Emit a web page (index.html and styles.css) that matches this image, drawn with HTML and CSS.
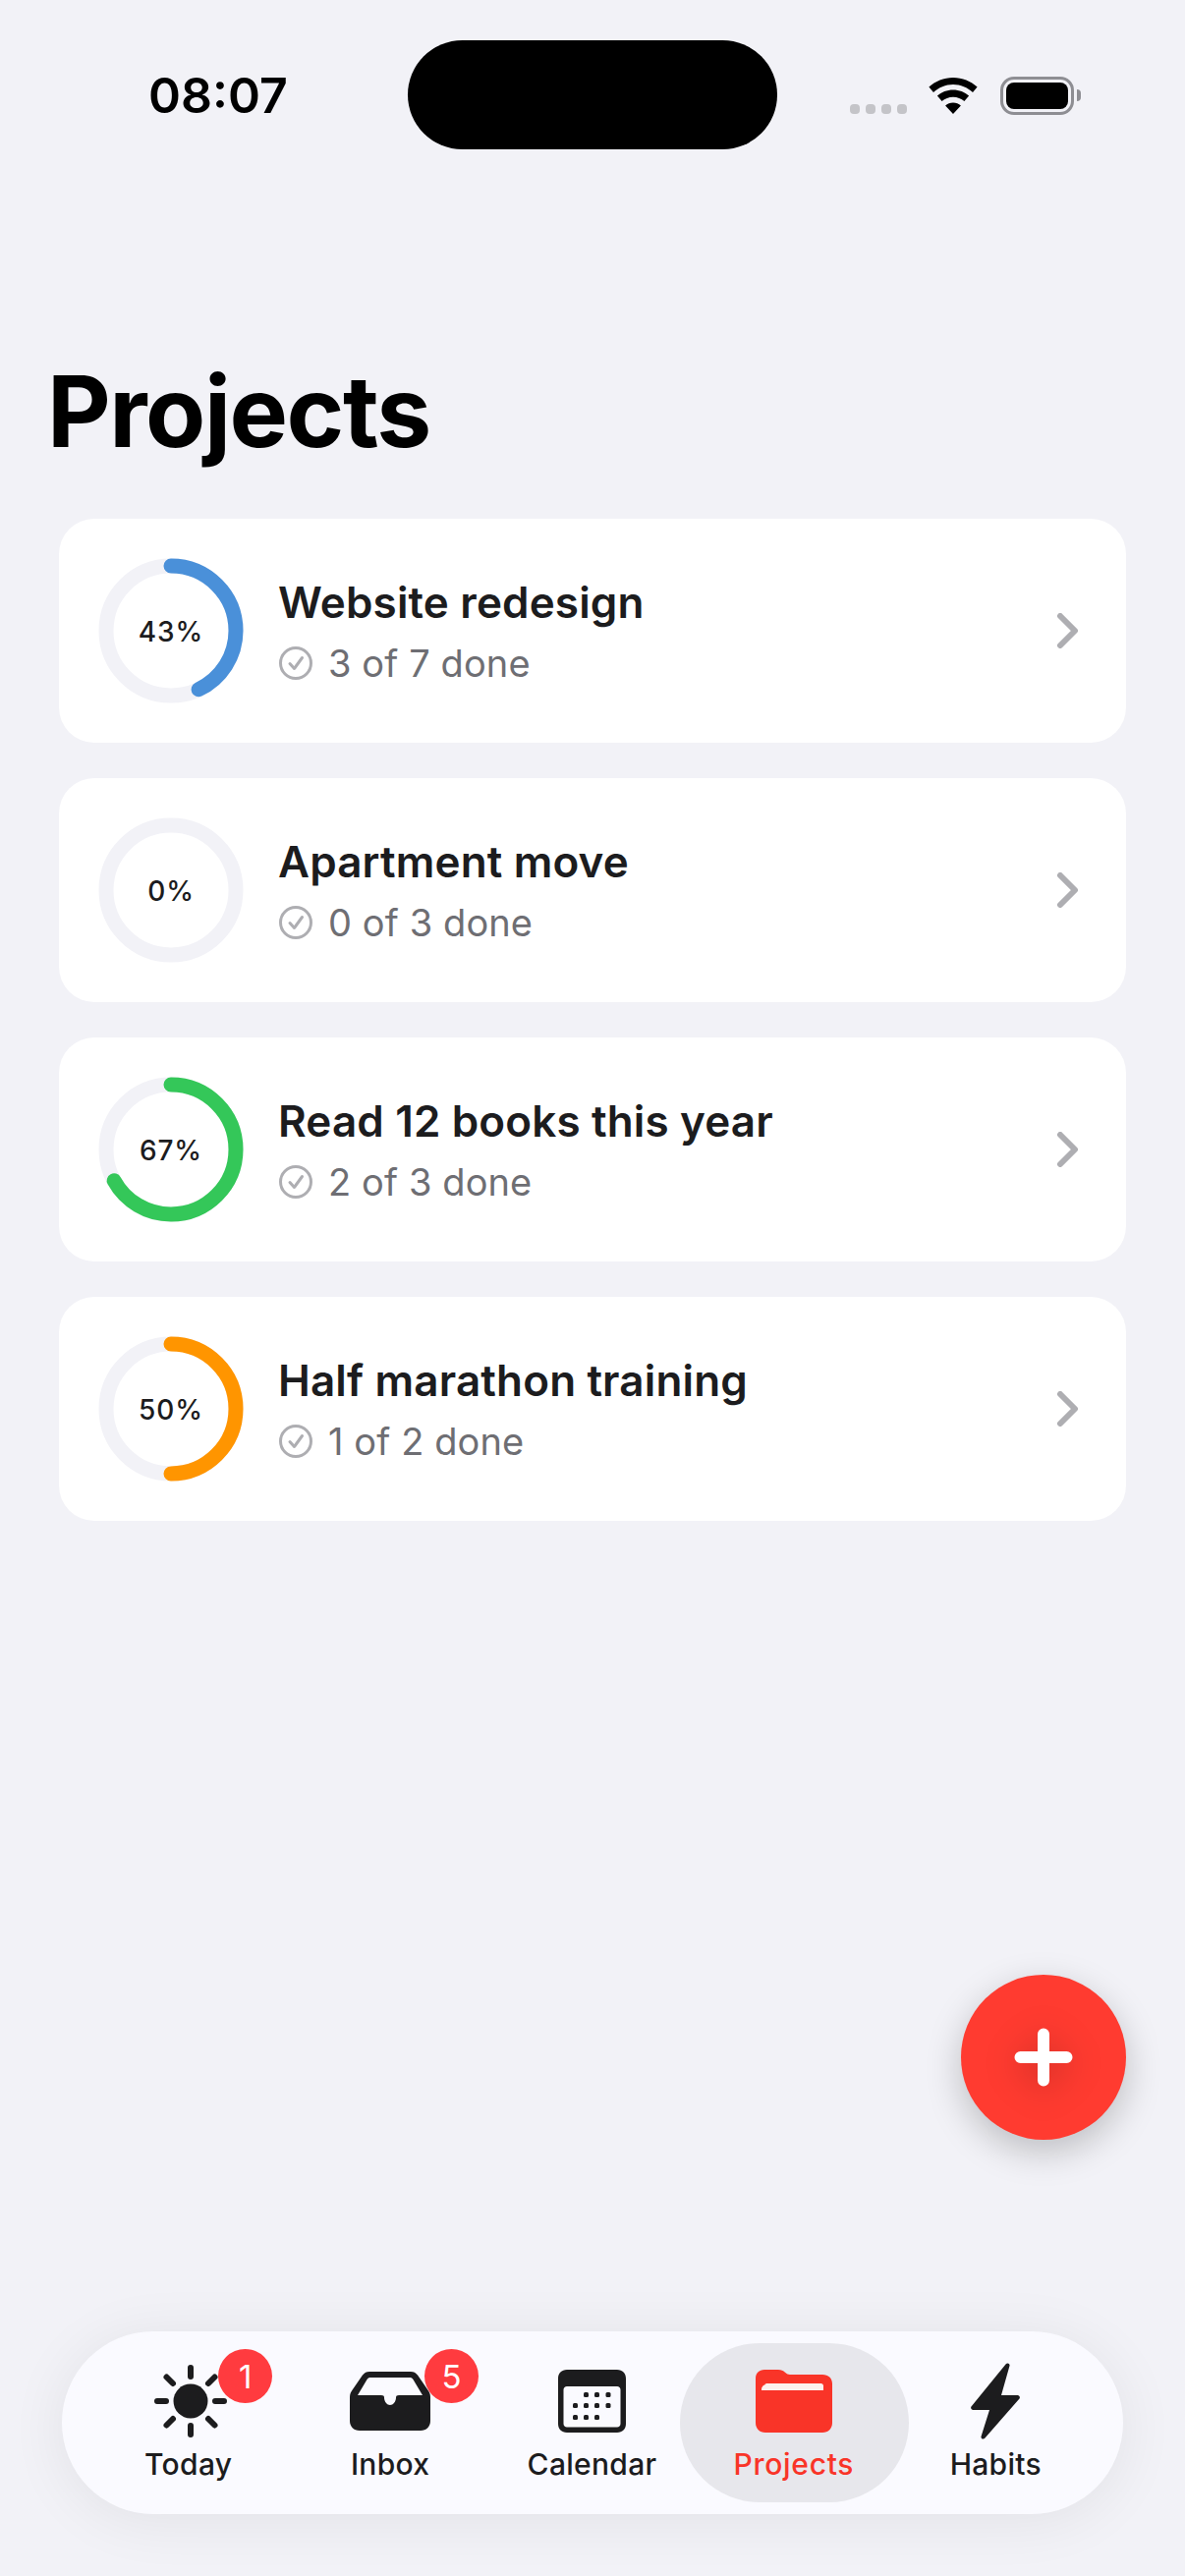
FILE: index.html
```html
<!DOCTYPE html>
<html lang="en">
<head>
<meta charset="utf-8">
<title>Projects</title>
<link rel="stylesheet" href="styles.css">
</head>
<body>
<div class="screen">
  <header class="status">
    <span class="time">08:07</span>
    <div class="island"></div>
    <div class="status-icons">
      <div class="dots"><i></i><i></i><i></i><i></i></div>
      <svg class="wifi" width="50" height="37" viewBox="0 0 50 37"><path d="M25 0C15.6 0 7 3.6.4 9.6l4.6 5.4C10.300 10.100 17.300 7 25 7s14.700 3.100 20 8l4.600-5.400C43 3.600 34.400 0 25 0zM25 12.500c-6.200 0-11.800 2.300-16.100 6.100l4.700 5.400c3.100-2.700 7.100-4.300 11.400-4.300s8.300 1.600 11.400 4.300l4.700-5.400c-4.300-3.800-9.900-6.100-16.100-6.100zM25 25.500c-3 0-5.800 1.100-7.900 3L25 37l7.900-8.500c-2.100-1.900-4.900-3-7.900-3z"/></svg>
      <div class="battery"><div class="battery-fill"></div></div>
      <div class="nub"></div>
    </div>
  </header>

  <h1 class="title">Projects</h1>

  <main class="list">
    <article class="card">
      <div class="ring">
        <svg viewBox="0 0 148 148" width="148" height="148"><circle class="track" cx="74" cy="74" r="66"/><circle class="arc" cx="74" cy="74" r="66" stroke="#4a90d9" pathLength="100" stroke-dasharray="43 100"/></svg>
        <span class="pct">43%</span>
      </div>
      <div class="info">
        <div class="name">Website redesign</div>
        <div class="sub"><svg class="check" width="34" height="34" viewBox="0 0 34 34"><circle cx="17" cy="17" r="15.500"/><path d="M11 17.500l4.500 5 8-11"/></svg><span>3 of 7 done</span></div>
      </div>
      <svg class="chev" width="24" height="36" viewBox="0 0 24 36"><path d="M4 3l15 15L4 33"/></svg>
    </article>
    <article class="card">
      <div class="ring">
        <svg viewBox="0 0 148 148" width="148" height="148"><circle class="track" cx="74" cy="74" r="66"/></svg>
        <span class="pct">0%</span>
      </div>
      <div class="info">
        <div class="name">Apartment move</div>
        <div class="sub"><svg class="check" width="34" height="34" viewBox="0 0 34 34"><circle cx="17" cy="17" r="15.500"/><path d="M11 17.500l4.500 5 8-11"/></svg><span>0 of 3 done</span></div>
      </div>
      <svg class="chev" width="24" height="36" viewBox="0 0 24 36"><path d="M4 3l15 15L4 33"/></svg>
    </article>
    <article class="card">
      <div class="ring">
        <svg viewBox="0 0 148 148" width="148" height="148"><circle class="track" cx="74" cy="74" r="66"/><circle class="arc" cx="74" cy="74" r="66" stroke="#34c759" pathLength="100" stroke-dasharray="67 100"/></svg>
        <span class="pct">67%</span>
      </div>
      <div class="info">
        <div class="name">Read 12 books this year</div>
        <div class="sub"><svg class="check" width="34" height="34" viewBox="0 0 34 34"><circle cx="17" cy="17" r="15.500"/><path d="M11 17.500l4.500 5 8-11"/></svg><span>2 of 3 done</span></div>
      </div>
      <svg class="chev" width="24" height="36" viewBox="0 0 24 36"><path d="M4 3l15 15L4 33"/></svg>
    </article>
    <article class="card">
      <div class="ring">
        <svg viewBox="0 0 148 148" width="148" height="148"><circle class="track" cx="74" cy="74" r="66"/><circle class="arc" cx="74" cy="74" r="66" stroke="#ff9500" pathLength="100" stroke-dasharray="50 100"/></svg>
        <span class="pct">50%</span>
      </div>
      <div class="info">
        <div class="name">Half marathon training</div>
        <div class="sub"><svg class="check" width="34" height="34" viewBox="0 0 34 34"><circle cx="17" cy="17" r="15.500"/><path d="M11 17.500l4.500 5 8-11"/></svg><span>1 of 2 done</span></div>
      </div>
      <svg class="chev" width="24" height="36" viewBox="0 0 24 36"><path d="M4 3l15 15L4 33"/></svg>
    </article>
  </main>

  <button class="fab" aria-label="Add project">
    <svg width="60" height="60" viewBox="0 0 60 60"><path d="M30 6.500v47M6.500 30h47"/></svg>
  </button>

  <nav class="tabbar">
    <div class="tab">
      <div class="tab-icon tab-icon-sun">
        <svg width="76" height="76" viewBox="0 0 76 76"><circle cx="38" cy="38" r="17.500" fill="#1c1c1e"/><path class="ray" d="M38 4v9M38 63v9M4 38h9M63 38h9M13.500 13.500l6.500 6.500M56 56l6.500 6.500M13.500 62.500L20 56M56 20l6.500-6.500"/></svg>
        <span class="badge badge-today">1</span>
      </div>
      <span class="tab-label">Today</span>
    </div>
    <div class="tab">
      <div class="tab-icon">
        <svg width="82" height="60" viewBox="0 0 82 60"><path fill="#1c1c1e" fill-rule="evenodd" d="M20 0h42c3 0 5 1 7 3.500L79 18c2 2.500 3 5 3 8v24c0 6-4 10-10 10H10C4 60 0 56 0 50V26c0-3 1-5.500 3-8L13 3.500C15 1 17 0 20 0zM21 6c-1.500 0-2.500.5-3.500 2L8 24h24c2 0 3 .7 3 2.500 0 4 3 7.500 6 7.500s6-3.500 6-7.500c0-1.800 1-2.500 3-2.500h24l-9.500-16C63.500 6.500 62.500 6 61 6z"/></svg>
        <span class="badge badge-inbox">5</span>
      </div>
      <span class="tab-label">Inbox</span>
    </div>
    <div class="tab">
      <div class="tab-icon">
        <svg width="69" height="64" viewBox="0 0 69 64"><path fill="#1c1c1e" fill-rule="evenodd" d="M9 0h51c5.500 0 9 3.500 9 9v46c0 5.500-3.500 9-9 9H9c-5.500 0-9-3.500-9-9V9C0 3.500 3.500 0 9 0zM9 17c-2 0-3.500 1.500-3.500 3.500V55c0 2 1.500 3.500 3.500 3.500h51c2 0 3.500-1.500 3.500-3.500V20.500c0-2-1.500-3.500-3.500-3.500z"/><g fill="#1c1c1e"><rect x="26" y="23" width="5" height="5" rx="1.500"/><rect x="37" y="23" width="5" height="5" rx="1.500"/><rect x="48.500" y="23" width="5" height="5" rx="1.500"/><rect x="15" y="34" width="5" height="5" rx="1.500"/><rect x="26" y="34" width="5" height="5" rx="1.500"/><rect x="37" y="34" width="5" height="5" rx="1.500"/><rect x="48.500" y="34" width="5" height="5" rx="1.500"/><rect x="15" y="46" width="5" height="5" rx="1.500"/><rect x="26" y="46" width="5" height="5" rx="1.500"/><rect x="37" y="46" width="5" height="5" rx="1.500"/></g></svg>
      </div>
      <span class="tab-label">Calendar</span>
    </div>
    <div class="tab tab-active">
      <div class="tab-icon">
        <svg width="78" height="64" viewBox="0 0 78 64"><path fill="#f93428" d="M9 0h14c3 0 5 1 7 2.800 1.800 1.700 3 2.200 5 2.200h33c6 0 10 3.500 10 9.500V54c0 6-4 10-10 10H10C4 64 0 60 0 54V9C0 3.500 3.500 0 9 0z"/><path fill="#fdf1ee" d="M9 16.500c0-1.500 1-2.500 2.500-2.500h55c1.500 0 2.500 1 2.500 2.500v4.500H6v-1c0-2 1-3.500 3-4.500z"/></svg>
      </div>
      <span class="tab-label">Projects</span>
    </div>
    <div class="tab">
      <div class="tab-icon">
        <svg width="50" height="78" viewBox="0 0 50 78"><path fill="#1c1c1e" d="M35.500 1.500C37 -.5 40 .5 39.500 3L31 33h16.500c2 0 3 2 2 3.500L14.500 76.500C13 78.500 10 77.500 10.500 75L19 48H2.500C.5 48-.5 46 .5 44.500z"/></svg>
      </div>
      <span class="tab-label">Habits</span>
    </div>
  </nav>
</div>
</body>
</html>
```

FILE: styles.css
```css
* { box-sizing: border-box; }
html, body { margin: 0; padding: 0; }
body {
  width: 1206px;
  height: 2622px;
  background: #f2f2f7;
  font-family: "Inter", "Liberation Sans", sans-serif;
  overflow: hidden;
}
.screen {
  display: flex;
  flex-direction: column;
  height: 2622px;
}

/* Status bar */
.status {
  display: flex;
  align-items: flex-start;
  height: 152px;
  padding-top: 41px;
  flex: none;
}
.time {
  width: 415px;
  padding-left: 151px;
  margin-top: 26px;
  font-size: 50px;
  line-height: 60px;
  font-weight: 600;
  color: #000;
  white-space: nowrap;
}
.island {
  width: 376px;
  height: 111px;
  border-radius: 56px;
  background: #000;
  flex: none;
}
.status-icons {
  display: flex;
  align-items: flex-end;
  margin-left: 74px;
  height: 75px;
}
.dots { display: flex; gap: 6px; margin-bottom: 0; }
.dots i {
  display: block;
  width: 10px;
  height: 10px;
  border-radius: 4px;
  background: #c4c4c8;
}
.wifi { margin-left: 22px; display: block; fill: #000; }
.battery {
  width: 75px;
  height: 39px;
  margin-left: 23px;
  margin-bottom: -1px;
  padding: 3px;
  border: 3px solid #8e8e93;
  border-radius: 14px;
  display: flex;
}
.battery-fill { flex: 1; background: #000; border-radius: 8px; }
.nub {
  width: 4px;
  height: 12px;
  margin-left: 3px;
  margin-bottom: 13px;
  background: #8e8e93;
  border-radius: 0 6px 6px 0;
}

/* Title */
.title {
  margin: 0;
  padding: 207px 0 0 48px;
  font-size: 100px;
  line-height: 120px;
  font-weight: 700;
  letter-spacing: -1.500px;
  color: #000;
  flex: none;
}

/* Cards */
.list {
  display: flex;
  flex-direction: column;
  gap: 36px;
  padding: 49px 60px 0;
  flex: none;
}
.card {
  display: flex;
  align-items: center;
  height: 228px;
  padding: 0 47px 0 40px;
  background: #fff;
  border-radius: 36px;
}
.ring {
  position: relative;
  width: 148px;
  height: 148px;
  flex: none;
}
.ring svg { display: block; transform: rotate(-90deg); }
.track { fill: none; stroke: #f2f2f7; stroke-width: 15; }
.arc { fill: none; stroke-width: 15; stroke-linecap: round; }
.pct {
  position: absolute;
  inset: 0;
  padding-top: 2px;
  display: flex;
  align-items: center;
  justify-content: center;
  font-size: 28px;
  font-weight: 500;
  letter-spacing: 0.900px;
  color: #1c1c1e;
}
.info { flex: 1; margin-left: 35px; min-width: 0; }
.name {
  position: relative;
  top: -1px;
  font-size: 44px;
  line-height: 54px;
  font-weight: 600;
  letter-spacing: 0.150px;
  color: #1c1c1e;
  white-space: nowrap;
}
.sub {
  display: flex;
  align-items: center;
  gap: 16px;
  margin-top: 11px;
  font-size: 38px;
  line-height: 46px;
  letter-spacing: 0.100px;
  color: #6e6e73;
  white-space: nowrap;
}
.check { flex: none; margin-left: 1px; fill: none; stroke: #aeaeb2; stroke-width: 3; stroke-linecap: round; stroke-linejoin: round; }
.chev { flex: none; fill: none; stroke: #aeaeb2; stroke-width: 6; stroke-linecap: round; stroke-linejoin: round; }

/* FAB */
.fab {
  align-self: flex-end;
  margin-top: auto;
  margin-right: 60px;
  margin-bottom: 195px;
  width: 168px;
  height: 168px;
  padding: 0;
  border: 0;
  border-radius: 50%;
  background: #ff3b30;
  display: flex;
  align-items: center;
  justify-content: center;
  box-shadow: 0 12px 36px rgba(0, 0, 0, 0.22);
  flex: none;
}
.fab svg {
  display: block;
  fill: none;
  stroke: #fff;
  stroke-width: 12;
  stroke-linecap: round;
  filter: drop-shadow(0 6px 18px rgba(0, 0, 0, 0.22));
}

/* Tab bar */
.tabbar {
  display: flex;
  width: 1080px;
  height: 186px;
  margin: 0 0 63px 63px;
  padding: 0 27px 0 26px;
  background: #fafaff;
  border-radius: 93px;
  box-shadow: 0 6px 60px rgba(0, 0, 0, 0.07);
  flex: none;
}
.tab {
  position: relative;
  flex: 1 1 0;
  display: flex;
  flex-direction: column;
  align-items: center;
  z-index: 0;
}
.tab-active::before {
  content: "";
  position: absolute;
  z-index: -1;
  top: 12px;
  bottom: 12px;
  left: -13px;
  right: -14px;
  border-radius: 81px;
  background: #e7e7ec;
}
.tab-icon {
  position: relative;
  display: flex;
  align-items: center;
  justify-content: center;
  height: 80px;
  margin-top: 31px;
}
.tab-icon-sun { margin-left: 5px; }
.tab-icon svg { display: block; }
.ray { fill: none; stroke: #1c1c1e; stroke-width: 6; stroke-linecap: round; }
.badge {
  position: absolute;
  top: -13px;
  width: 55px;
  height: 55px;
  border-radius: 50%;
  background: #ff3b3f;
  color: #fff;
  font-size: 33px;
  font-weight: 400;
  display: flex;
  align-items: center;
  justify-content: center;
}
.badge-today { left: 66px; }
.badge-inbox { left: 76px; }
.tab-label {
  margin-top: 6px;
  font-size: 30px;
  line-height: 36px;
  font-weight: 500;
  letter-spacing: 0.300px;
  color: #1c1c1e;
  white-space: nowrap;
}
.tab-active .tab-label { color: #f93428; letter-spacing: 0.700px; }
```
